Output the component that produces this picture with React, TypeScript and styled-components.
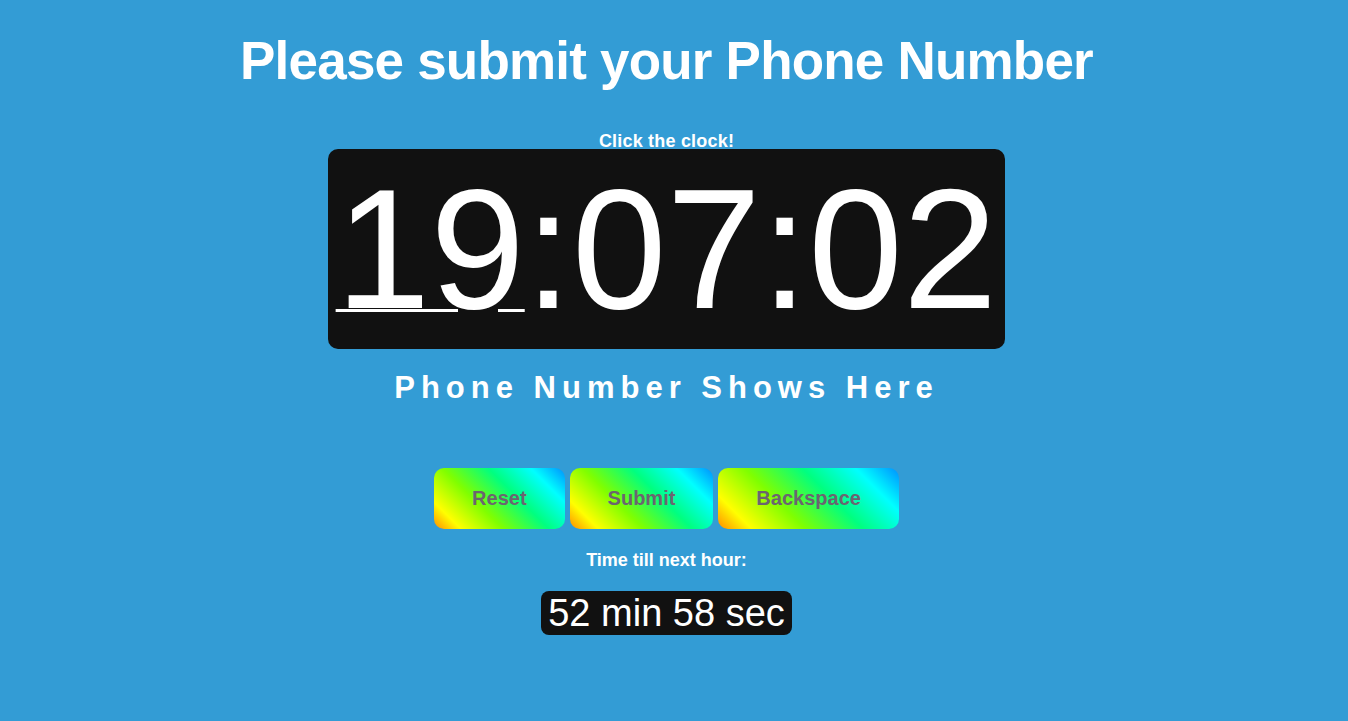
import React from "react";
import styled, { createGlobalStyle } from "styled-components";

const GlobalStyle = createGlobalStyle`
  html, body {
    margin: 0;
    padding: 0;
    background: #339cd5;
    font-family: "Liberation Sans", Arial, sans-serif;
  }
`;

const Page = styled.main`
  min-height: 721px;
  box-sizing: border-box;
  padding: 30px 15px 0 0;
  display: flex;
  flex-direction: column;
  align-items: center;
  background: #339cd5;
  color: #ffffff;
`;

const Title = styled.h1`
  margin: 0;
  font-size: 53px;
  font-weight: 700;
  letter-spacing: -0.8px;
  line-height: normal;
  color: #ffffff;
`;

const Hint = styled.div`
  margin-top: 42px;
  font-size: 18px;
  font-weight: 700;
  line-height: 16px;
  letter-spacing: 0.2px;
`;

const Clock = styled.div`
  background: #111111;
  border-radius: 10px;
  padding: 0 8px;
  height: 200px;
  font-size: 170px;
  line-height: 200px;
  font-weight: 400;
  color: #ffffff;
  white-space: nowrap;
  cursor: pointer;
`;

const Hours = styled.span`
  text-decoration: underline;
  text-decoration-thickness: 3px;
  text-underline-offset: 1px;
  text-decoration-skip-ink: auto;
`;

const PhoneText = styled.div`
  margin-top: 21px;
  font-size: 31px;
  font-weight: 700;
  letter-spacing: 6px;
  line-height: normal;
`;

const ButtonRow = styled.div`
  margin-top: 62px;
  display: flex;
  gap: 5px;
`;

const GradientButton = styled.button`
  height: 61px;
  padding: 0 38px;
  border: none;
  border-radius: 10px;
  font-family: "Liberation Sans", Arial, sans-serif;
  font-size: 20px;
  font-weight: 700;
  color: #6b6570;
  cursor: pointer;
  background: linear-gradient(
    45deg,
    #ff8c00 0%,
    #ffff00 14%,
    #80ff00 36%,
    #00ff80 60%,
    #00ffff 82%,
    #0090ff 100%
  );
`;

const NextLabel = styled.div`
  margin-top: 21px;
  font-size: 18px;
  font-weight: 700;
  line-height: normal;
`;

const Remaining = styled.div`
  margin-top: 20px;
  background: #111111;
  border-radius: 8px;
  padding: 0 7px;
  font-size: 38px;
  line-height: 44px;
  color: #ffffff;
  white-space: nowrap;
`;

export default function App() {
  return (
    <>
      <GlobalStyle />
      <Page>
        <Title>Please submit your Phone Number</Title>
        <Hint>Click the clock!</Hint>
        <Clock>
          <Hours>19</Hours>:07:02
        </Clock>
        <PhoneText>Phone Number Shows Here</PhoneText>
        <ButtonRow>
          <GradientButton>Reset</GradientButton>
          <GradientButton>Submit</GradientButton>
          <GradientButton>Backspace</GradientButton>
        </ButtonRow>
        <NextLabel>Time till next hour:</NextLabel>
        <Remaining>52 min 58 sec</Remaining>
      </Page>
    </>
  );
}
